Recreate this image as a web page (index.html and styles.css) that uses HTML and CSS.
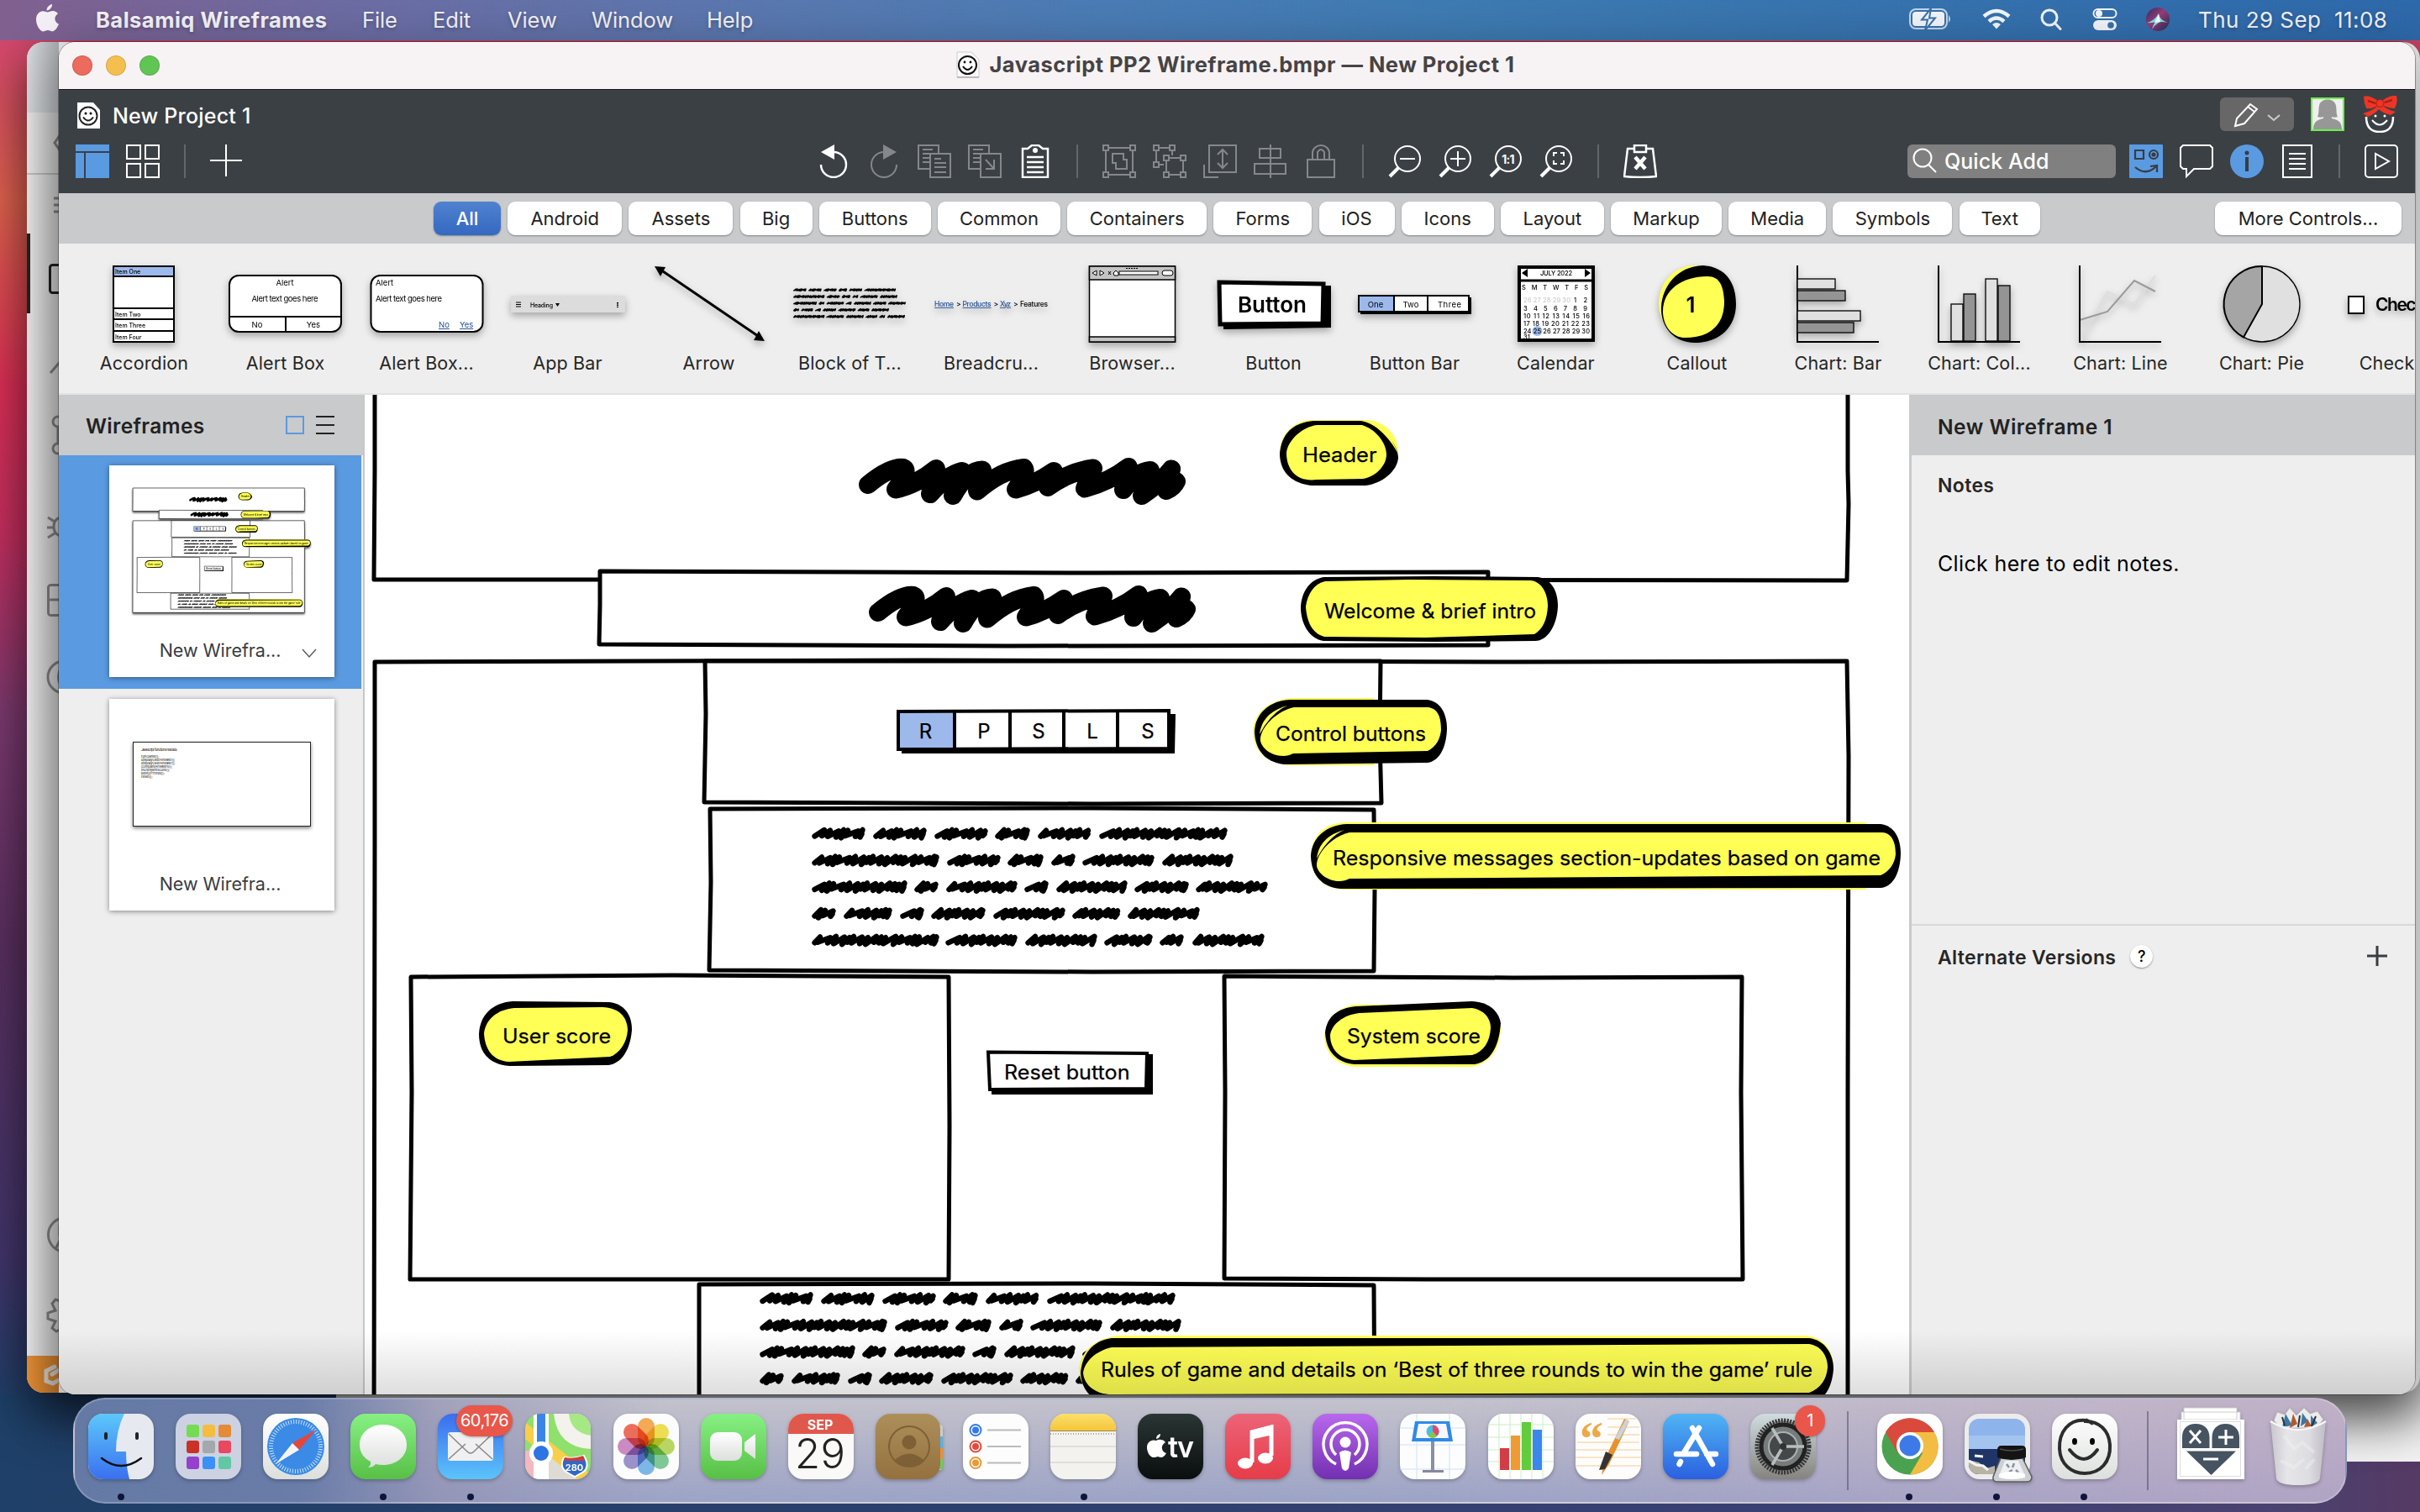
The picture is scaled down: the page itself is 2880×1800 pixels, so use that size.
FILE: index.html
```html
<!DOCTYPE html>
<html lang="en">
<head>
<meta charset="utf-8">
<title>Balsamiq Wireframes</title>
<link rel="stylesheet" href="styles.css">
</head>
<body>
<div class="desktop">

<div class="white-window"></div>
<div class="editor-window">
  <svg width="38" height="1608" viewBox="32 50 38 1608" fill="none" stroke="#8b8b8b" stroke-width="3">
    <defs><linearGradient id="fade"><stop offset="0" stop-opacity="0"/><stop offset="1" stop-opacity=".2"/></linearGradient></defs>
    <rect x="32" y="50" width="38" height="84" fill="#d8dbdf" stroke="none"/>
    <path d="M32 207H70" stroke="#c4c4c4" stroke-width="2"/>
    <path d="M72 160L65 170L72 180M64 236h10M64 244h10M64 252h10"/>
    <path d="M34 278V373" stroke="#222" stroke-width="4"/>
    <rect x="59.500" y="315.500" width="30" height="33" rx="3" stroke="#222"/>
    <path d="M60 444L72 430"/>
    <circle cx="69" cy="502" r="6"/><circle cx="69" cy="534" r="6"/><path d="M69 508v20"/>
    <path d="M57 616l8 5M56 628h8M57 640l8-5M72 616q-8 2-8 11t8 11"/>
    <rect x="57.500" y="696.500" width="30" height="36" rx="3"/><path d="M57 714h20"/>
    <circle cx="76" cy="806" r="19"/><path d="M72 796q-5 10 0 20"/>
    <circle cx="78" cy="1470" r="20.500"/><path d="M66 1487l6-12M71 1458v14"/>
    <path d="M72 1549l-6-2-4 5 4 8-9 3v7l9 3-4 8 5 4 6-3"/>
    <rect x="32" y="1614" width="38" height="44" fill="#e88f34" stroke="none"/>
    <path d="M65 1627l-10 5v12l8 3 10-6M62 1636l10-6" stroke="#e4e1dc" stroke-width="5" stroke-linecap="round"/>
    <rect x="32" y="50" width="38" height="1608" fill="url(#fade)" stroke="none"/>
  </svg>
</div>

<header class="menubar">
  <svg class="apple" width="28" height="34" viewBox="0 0 28 34" fill="#f4f0f6"><path d="M19 0c.4 3.600-3 7.500-6.400 7.400C12.200 4 15.500.6 19 0zM13.500 9.500C15 9.500 17 8 20 8c2.600 0 4.800 1.400 6 3.200-5.400 3.300-4.400 10.400 1 12.400-1.400 4-4.600 8.800-7.600 8.800-2 0-2.900-1.300-5.400-1.300s-3.500 1.300-5.300 1.300C4.600 32.400 0 24.800 0 18.400 0 12 4 8.300 8 8.300c2.400 0 4 1.200 5.500 1.200z"/></svg>
  <b class="m-app">Balsamiq Wireframes</b><span class="m-file">File</span><span class="m-edit">Edit</span><span class="m-view">View</span><span class="m-window">Window</span><span>Help</span>
  <div class="status">
    <svg width="52" height="28" viewBox="0 0 52 28"><rect x="1" y="2" width="44" height="23" rx="7" fill="none" stroke="#c4d6ea" stroke-width="2"/><rect x="4" y="5" width="38" height="17" rx="4" fill="#f2f6fa"/><path d="M47 9q4 4.500 0 9z" fill="#c4d6ea"/><path d="M26 1L15 14.500h7L19 27l12-14.500h-7z" fill="#f2f6fa" stroke="#3a72ae" stroke-width="2"/></svg>
    <svg width="34" height="26" viewBox="0 0 34 26" fill="none" stroke="#f2f6fa" stroke-width="4.500"><path d="M2 9.500Q17-3.500 32 9.500M8 15.500q9-8 18 0"/><path d="M17 24.500l-5-5.500q5-4 10 0z" fill="#f2f6fa" stroke="none"/></svg>
    <svg width="26" height="26" viewBox="0 0 26 26" fill="none" stroke="#f2f6fa" stroke-width="3" stroke-linecap="round"><circle cx="11" cy="11" r="9"/><path d="M17.500 17.500L24 24.500"/></svg>
    <svg width="30" height="28" viewBox="0 0 30 28"><rect x="1.500" y="2" width="27" height="10" rx="5" fill="none" stroke="#f2f6fa" stroke-width="2"/><circle cx="8" cy="7" r="4" fill="#f2f6fa"/><rect x="1" y="15" width="28" height="12" rx="6" fill="#f2f6fa"/><circle cx="22" cy="21" r="3.800" fill="#3a72ae"/></svg>
    <svg width="30" height="30" viewBox="0 0 30 30"><defs><linearGradient id="siri" x1="0" y1="0" x2="1" y2="1"><stop offset="0" stop-color="#293064"/><stop offset=".45" stop-color="#9b3c78"/><stop offset="1" stop-color="#1e2c55"/></linearGradient></defs><circle cx="15" cy="15" r="14" fill="url(#siri)"/><path d="M2 19q9-2 14-11 1 8 11 11-8-2-11 0-5 3-8 8 2-7 4-9-6 2-10 1z" fill="#7fe0e8"/><path d="M11 19l5-10 2 9z" fill="#fff"/></svg>
    <span class="clock">Thu 29 Sep&nbsp; 11:08</span>
  </div>
</header>

<main class="window">
  <div class="titlebar">
    <div class="lights"><i class="red"></i><i class="amber"></i><i class="green"></i></div>
    <svg width="28" height="32" viewBox="0 0 28 32"><path d="M1 1h17l9 9v21H1z" fill="#fafafa" stroke="#ccc"/><path d="M1 31h26" stroke="#bbb" stroke-width="2"/><circle cx="13.500" cy="16.500" r="10.500" fill="#fff" stroke="#111" stroke-width="2"/><path d="M8 18q5.500 8 11 0" fill="none" stroke="#111" stroke-width="2"/><circle cx="10" cy="13" r="1.400"/><circle cx="17" cy="13" r="1.400"/></svg>
    <span>Javascript PP2 Wireframe.bmpr — New Project 1</span>
  </div>

  <div class="topbar">
    <div class="project">
      <svg width="29" height="32" viewBox="0 0 29 32"><path d="M1 0h19l8 9v22H1z" fill="#fff"/><circle cx="14" cy="16" r="10.500" fill="#fff" stroke="#222" stroke-width="2"/><path d="M8 17.500q6 8 12 0" fill="none" stroke="#222" stroke-width="2"/><circle cx="11" cy="13" r="1.500"/><circle cx="17" cy="13" r="1.500"/></svg>
      <span>New Project 1</span>
      <div class="account">
        <div class="pencil">
          <svg width="88" height="40" viewBox="0 0 88 40" fill="none" stroke="#fff" stroke-width="2"><path d="M18 34l2-9L36 8l8 6-15 17zM33 11l8 6"/><path d="M57 21l7 6 7-6" stroke="#ccc"/></svg>
        </div>
        <svg width="40" height="40" viewBox="0 0 40 40"><rect x="1" y="1" width="38" height="38" fill="#f0f0f0" stroke="#6af04a" stroke-width="2"/><path d="M3 38c0-8 3-11 12-13v-2c-2 1-4 1-7 0 2-4 1-8 2-13 1-10 19-10 20 0 1 5 0 9 2 13-3 1-5 1-7 0v2c9 2 12 5 12 13z" fill="#979797"/></svg>
        <svg width="44" height="44" viewBox="0 0 44 44" fill="none"><path d="M6 25q0 18 16 18t16-18" stroke="#fff" stroke-width="2.500"/><path d="M13 29q9 11 18 0" stroke="#fff" stroke-width="2"/><circle cx="17" cy="24" r="1.500" fill="#fff"/><circle cx="28" cy="24" r="1.500" fill="#fff"/><path d="M20 6Q8-2 3 1q0 7 3 14 8 1 14-4-4 6-18 10l6 4q9-4 13-9 5 5 14 7l6-4q-10-2-16-8 8 4 15 4 4-8 2-15Q33-1 25 6z" fill="#ee3524"/><circle cx="22.500" cy="9" r="4.500" fill="#ee3524" stroke="#a32018"/><path d="M8 6l9 3M37 5l-9 3" stroke="#9e1d16" stroke-width="2"/></svg>
      </div>
    </div>

    <div class="toolbar">
      <div class="group">
        <svg width="40" height="40" viewBox="0 0 40 40" fill="#5a9ae1"><path d="M0 0h40v8H0zM0 10h10v30H0zM12 10h28v30H12z"/></svg>
        <svg width="40" height="40" viewBox="0 0 40 40" fill="none" stroke="#fff" stroke-width="2"><path d="M1 1h16v16H1zM23 1h16v16H23zM1 23h16v16H1zM23 23h16v16H23z"/></svg>
        <i class="sep"></i>
        <svg width="40" height="40" viewBox="0 0 40 40" stroke="#fff" stroke-width="2"><path d="M0 19h38M19 0v38"/></svg>
      </div>
      <div class="group">
        <svg width="40" height="40" viewBox="0 0 40 40" fill="none" stroke="#fff" stroke-width="2.500"><path d="M5 24a15 15 0 1 0 15-15"/><path d="M21 0v18L5 9z" fill="#fff" stroke="none"/></svg>
        <svg class="off" width="40" height="40" viewBox="0 0 40 40" fill="none" stroke-width="2"><path d="M35 24A15 15 0 1 1 20 9"/><path d="M19 0v18l16-9z" fill="#85888a" stroke="none"/></svg>
        <svg class="off" width="40" height="40" viewBox="0 0 40 40" fill="none" stroke-width="2"><path d="M15 29H1V1h24v10M6 6h12M6 11h9M6 16h8M6 21h8M15 11h24v28H15zM20 17h8M20 22h14M20 27h14M20 33h14"/></svg>
        <svg class="off" width="40" height="40" viewBox="0 0 40 40" fill="none" stroke-width="2"><path d="M15 29H1V1h24v10M6 6h12M6 11h9M6 16h8M6 21h8M15 11h24v28H15zM21 18l10 11M31 18v11H21"/></svg>
        <svg width="40" height="40" viewBox="0 0 40 40" fill="none" stroke="#fff" stroke-width="2.500"><path d="M5 5h6l5-4h8l5 4h6v34H5zM10 15h20M10 21h20M10 27h20M10 33h20"/><circle cx="20" cy="7" r="3" fill="#fff" stroke="none"/></svg>
        <i class="sep"></i>
        <svg class="off" width="40" height="40" viewBox="0 0 40 40" fill="none" stroke-width="2"><path d="M4 7v26M36 7v26M7 4h26M7 36h26M1 1h6v6H1zM33 1h6v6h-6zM1 33h6v6H1zM33 33h6v6h-6zM12 11h13v7h4v11H16v-7h-4z"/></svg>
        <svg class="off" width="40" height="40" viewBox="0 0 40 40" fill="none" stroke-width="2"><path d="M1 1h6v6H1zM20 1h6v6h-6zM1 21h6v6H1zM13 13h6v6h-6zM33 13h6v6h-6zM13 33h6v6h-6zM33 33h6v6h-6zM4 7v14M7 4h13M23 7v6M7 24h6M16 19v14M36 19v14M19 16h14M19 36h14"/></svg>
        <svg class="off" width="40" height="40" viewBox="0 0 40 40" fill="none" stroke-width="2"><path d="M7 1h32v32H7zM1 24v15h17M23 7v20M17 12l6-6 6 6M17 22l6 6 6-6"/></svg>
        <svg class="off" width="40" height="40" viewBox="0 0 40 40" fill="none" stroke-width="2"><path d="M7 5h25v11H7zM1 23h37v12H1zM20 0v40"/></svg>
        <svg class="off" width="40" height="40" viewBox="0 0 40 40" fill="none" stroke-width="2"><path d="M4 18h32v21H4zM10 18v-8a10 9 0 0 1 20 0v8M16 18v-9q4-6 8 0v9"/></svg>
        <i class="sep"></i>
        <svg width="40" height="40" viewBox="0 0 40 40" fill="none" stroke="#fff" stroke-width="2"><circle cx="23" cy="17" r="15"/><path d="M14 17h18"/><path d="M12 28L2 38" stroke-width="4"/></svg>
        <svg width="40" height="40" viewBox="0 0 40 40" fill="none" stroke="#fff" stroke-width="2"><circle cx="23" cy="17" r="15"/><path d="M14 17h18M23 8v18"/><path d="M12 28L2 38" stroke-width="4"/></svg>
        <svg width="40" height="40" viewBox="0 0 40 40" fill="none" stroke="#fff" stroke-width="2"><circle cx="23" cy="17" r="15"/><path d="M12 28L2 38" stroke-width="4"/><text x="22.500" y="22.500" class="one">1:1</text></svg>
        <svg width="40" height="40" viewBox="0 0 40 40" fill="none" stroke="#fff" stroke-width="2"><circle cx="23" cy="17" r="15"/><path d="M12 28L2 38" stroke-width="4"/><path d="M17 14v-4h4M25 10h4v4M29 19v4h-4M21 23h-4v-4"/></svg>
        <i class="sep"></i>
        <svg width="40" height="40" viewBox="0 0 40 40" fill="none" stroke="#fff" stroke-width="2.500"><path d="M12 5H5L1 38q19 2 38 0L35 5h-7M13 1h14v8H13z"/><path d="M14 15l12 14M26 15L14 29" stroke-width="4.500"/></svg>
      </div>
      <div class="group end">
        <div class="quick"><svg width="32" height="32" viewBox="0 0 32 32" fill="none" stroke="#fff" stroke-width="2"><circle cx="12" cy="12" r="10.500"/><path d="M19 20l9 9"/></svg>Quick Add</div>
        <svg width="40" height="40" viewBox="0 0 40 40" fill="none" stroke="#383d42" stroke-width="2.200"><rect width="40" height="40" rx="1" fill="#5a9ae1" stroke="none"/><path d="M7 7h10v10H7zM7 27q13 11 25-1M25 26l8-1v8"/><circle cx="29" cy="12" r="5"/><circle cx="29" cy="12" r="1.500" fill="#383d42"/></svg>
        <svg width="40" height="40" viewBox="0 0 40 40" fill="none" stroke="#fff" stroke-width="2"><path d="M4 1h32l3 3v22l-3 3H17L8 38V29H4l-3-3V4z"/></svg>
        <svg width="40" height="40" viewBox="0 0 40 40"><circle cx="20" cy="20" r="20" fill="#5a9ae1"/><circle cx="20" cy="10" r="2.500" fill="#383d42"/><path d="M20 15v17" stroke="#383d42" stroke-width="4"/></svg>
        <svg width="40" height="40" viewBox="0 0 40 40" fill="none" stroke="#fff" stroke-width="2"><path d="M3 1h34v38H3zM10 11h20M10 17h20M10 23h20M10 29h20"/></svg>
        <i class="sep"></i>
        <svg width="40" height="40" viewBox="0 0 40 40" fill="none" stroke="#fff" stroke-width="2"><rect x="1" y="1" width="38" height="38" rx="4"/><path d="M13 11v18l16-9z"/></svg>
      </div>
    </div>
  </div>

  <nav class="categories">
    <div class="tabs"><button class="on">All</button><button>Android</button><button>Assets</button><button>Big</button><button>Buttons</button><button>Common</button><button>Containers</button><button>Forms</button><button>iOS</button><button>Icons</button><button>Layout</button><button>Markup</button><button>Media</button><button>Symbols</button><button>Text</button></div>
    <button class="more">More Controls...</button>
  </nav>

  <section class="palette">
    <figure><svg viewBox="0 0 168 100"><g class="ink"><rect x="48" y="5" width="72" height="90"/><rect x="48" y="5" width="72" height="12" fill="#9db9ec"/><path d="M48 55h72M48 68h72M48 82h72"/></g><g class="t9"><text x="50" y="14">Item One</text><text x="50" y="64.500">Item Two</text><text x="50" y="78">Item Three</text><text x="50" y="91.500">Item Four</text></g></svg><figcaption>Accordion</figcaption></figure>
    <figure><svg viewBox="0 0 168 100"><g class="ink"><rect x="18" y="16" width="133" height="67" rx="11"/><path d="M18 65h133M85 65v18"/></g><g class="t11 mid"><text x="84" y="28">Alert</text><text x="84" y="47" textLength="79">Alert text goes here</text><text x="51" y="78">No</text><text x="118" y="78">Yes</text></g></svg><figcaption>Alert Box</figcaption></figure>
    <figure><svg viewBox="0 0 168 100"><g class="ink"><rect x="18.500" y="16" width="133" height="67" rx="11"/></g><g class="t11"><text x="24" y="28">Alert</text><text x="24" y="47" textLength="79">Alert text goes here</text><text class="link" x="99" y="78">No</text><text class="link" x="124" y="78">Yes</text></g></svg><figcaption>Alert Box...</figcaption></figure>
    <figure><svg viewBox="0 0 168 100"><rect x="17" y="40" width="136" height="20" fill="#dcdcdc"/><path d="M23 48h6M23 50.500h6M23 53h6" stroke="#000"/><text class="t9" x="40" y="53.500" textLength="27">Heading</text><path d="M70 49h5l-2.500 4z"/><path d="M144 48v6" stroke="#000" stroke-width="2" stroke-dasharray="1.500 1"/></svg><figcaption>App Bar</figcaption></figure>
    <figure><svg viewBox="0 0 168 100"><path d="M27 9L146 90" stroke="#000" stroke-width="3"/><path d="M20 5l13 1-6 11zM151 94l-13-1 6-11z"/></svg><figcaption>Arrow</figcaption></figure>
    <figure><svg viewBox="0 0 168 100"><use href="#copy" transform="translate(17 33) scale(.247 .25)"/></svg><figcaption>Block of T...</figcaption></figure>
    <figure><svg viewBox="0 0 168 100"><g class="t10"><text class="link" x="17" y="53" textLength="23">Home</text><text x="43" y="53">&gt;</text><text class="link" x="50.500" y="53" textLength="34">Products</text><text x="87.500" y="53">&gt;</text><text class="link" x="95" y="53" textLength="13">Xyz</text><text x="111" y="53">&gt;</text><text x="119" y="53" textLength="33">Features</text></g></svg><figcaption>Breadcru...</figcaption></figure>
    <figure><svg viewBox="0 0 168 100"><g class="ink thin"><rect x="33.500" y="5" width="102" height="90"/><rect x="33.500" y="5" width="102" height="16" fill="#c4c4c4"/><rect x="33.500" y="89" width="102" height="6" fill="#c4c4c4"/></g><rect x="69" y="11" width="46" height="4" fill="#fff" stroke="#000" stroke-width="1"/><rect x="120" y="10" width="13" height="6" rx="3" fill="#fff" stroke="#000" stroke-width="1"/><path d="M37 13l5-3v6zM51 13l-5-3v6zM56 11l3 4M59 11l-3 4M62 13l3-3 3 3v3h-5z" fill="#fff" stroke="#000"/><path d="M77 7.500h14" stroke="#000" stroke-dasharray="2 1"/></svg><figcaption>Browser...</figcaption></figure>
    <figure><svg viewBox="0 0 168 100"><path d="M25 30L153 28v50L25 80z"/><path d="M20 24l124 2-1 47-122 1z" fill="#fff" stroke="#000" stroke-width="5"/><text x="83" y="60" class="big mid" textLength="82">Button</text></svg><figcaption>Button</figcaption></figure>
    <figure><svg viewBox="0 0 168 100"><path d="M20 42h132v20H20z"/><g class="ink"><rect x="18" y="40" width="131" height="19"/><rect x="18" y="40" width="42" height="19" fill="#9db9ec"/><path d="M100 40v19"/></g><g class="t11 mid"><text x="38" y="54">One</text><text x="80" y="54">Two</text><text x="126" y="54" textLength="28">Three</text></g></svg><figcaption>Button Bar</figcaption></figure>
    <figure><svg viewBox="0 0 168 100"><rect x="41" y="6" width="88" height="87" fill="#fff" stroke="#000" stroke-width="4"/><path d="M41 22h88" stroke="#000" stroke-width="3"/><path d="M44 13l7-5v10zM126 13l-7-5v10z"/><circle cx="62.500" cy="82" r="6" fill="#9db9ec"/><g class="cal"><text x="66" y="16" textLength="38">JULY 2022</text><text x="44" y="33" textLength="79">S  M  T  W  T  F  S</text><text x="46" y="48" fill="#ccc" textLength="56">26 27 28 29 30</text><text x="106" y="48" textLength="16">1   2</text><text x="46" y="58" textLength="76">3   4   5   6   7   8   9</text><text x="46" y="67" textLength="79">10 11 12 13 14 15 16</text><text x="46" y="76" textLength="79">17 18 19 20 21 22 23</text><text x="46" y="85" textLength="79">24 25 26 27 28 29 30</text><text x="46" y="92">31</text></g></svg><figcaption>Calendar</figcaption></figure>
    <figure><svg viewBox="0 0 168 100"><ellipse cx="82" cy="49" rx="43" ry="45" fill="#ff5"/><path d="M92 4c28 2 39 22 39 46 0 28-20 46-49 46-26 0-41-20-40-42C43 30 60 5 92 4z"/><path d="M97 17c15 0 19 12 20 30 0 28-17 43-47 43-12 0-25-10-26-30-1-26 22-43 53-43z" fill="#ff5"/><text x="77" y="60" class="big mid">1</text></svg><figcaption>Callout</figcaption></figure>
    <figure><svg viewBox="0 0 168 100"><g class="ink bars"><path d="M36 4v91h97" fill="none"/><rect x="36" y="20" width="45" height="12"/><rect x="36" y="34" width="57" height="12" class="dk"/><rect x="36" y="58" width="75" height="12"/><rect x="36" y="72" width="67" height="12" class="dk"/></g></svg><figcaption>Chart: Bar</figcaption></figure>
    <figure><svg viewBox="0 0 168 100"><g class="ink bars"><path d="M36 4v91h97" fill="none"/><rect x="51" y="50" width="14" height="44"/><rect x="66" y="38" width="14" height="56" class="dk"/><rect x="92" y="20" width="14" height="74"/><rect x="107" y="28" width="14" height="66" class="dk"/></g></svg><figcaption>Chart: Col...</figcaption></figure>
    <figure><svg viewBox="0 0 168 100" fill="none"><path d="M38 93L69 35l32 16 25-35" stroke="#ddd" stroke-width="2"/><path d="M36 69l33-10 32-37 25 13" stroke="#999" stroke-width="2"/><path d="M36 4v91h97" stroke="#000" stroke-width="2"/></svg><figcaption>Chart: Line</figcaption></figure>
    <figure><svg viewBox="0 0 168 100"><g class="ink bars"><circle cx="85" cy="50" r="45"/><path d="M85 50V5A45 45 0 0 0 63 89.500z" fill="#a5a5a5"/></g></svg><figcaption>Chart: Pie</figcaption></figure>
    <figure><svg viewBox="0 0 168 100"><rect x="20" y="41" width="18" height="20" class="ink"/><text x="52" y="58" class="check" textLength="92">Checkbox</text></svg><figcaption>Checkbox</figcaption></figure>
  </section>

  <div class="body">
    <aside class="left">
      <div class="panel-head"><span>Wireframes</span>
        <svg width="60" height="24" viewBox="0 0 60 24" fill="none" stroke-width="2"><rect x="2" y="1" width="20" height="20" stroke="#5a9ae1"/><path d="M37 1h22M37 11h22M37 21h22" stroke="#222"/></svg>
      </div>
      <div class="page selected"><div class="card">
        <svg width="268" height="180" viewBox="130 554 268 180"><g class="mini" transform="translate(106.160 528.110) scale(.1165)"><use href="#board"/></g></svg>
        <div class="name"><span>New Wirefra...</span><svg width="18" height="12" viewBox="0 0 18 12" fill="none" stroke="#555" stroke-width="1.300"><path d="M1 1l8 9 8-9"/></svg></div>
      </div></div>
      <div class="page"><div class="card">
        <svg class="page2" width="268" height="180" viewBox="130 832 268 180"><rect x="158.500" y="883.500" width="211" height="100" fill="#fff" stroke="#222"/><g class="code"><text x="168" y="894" textLength="43">Javascript functions needed:</text><text x="168" y="902">runGame();</text><text x="168" y="906">displayUserAnswer();</text><text x="168" y="910">displayUserAnswer();</text><text x="168" y="914">compareAnswers();</text><text x="168" y="918">incrementScore();</text><text x="168" y="922">bestOfThree();</text><text x="168" y="926">reset();</text></g></svg>
        <div class="name"><span>New Wirefra...</span></div>
      </div></div>
    </aside>

    <div class="canvas">
      <svg width="1838" height="1190" viewBox="434 470 1838 1190">
        <g id="board">
          <g class="box">
            <path d="M446 454L2199 454L2199 560L2200 600L2198 691L1300 690L445 690L446 560z"/>
            <path d="M714 680L1300 682L1771 681L1770 730L1771 768L1200 769L713 767L714 720z"/>
            <path d="M446 788L1100 786L1800 788L2198 787L2200 900L2199 1300L2199 1727L445 1727L446 1000z"/>
            <path d="M839 787L1643 787L1642 880L1644 956L1300 957L838 955L840 850z"/>
            <path d="M845 963L1300 962L1635 964L1636 1060L1635 1156L1300 1157L844 1155L846 1050z"/>
            <path d="M489 1163L800 1161L1129 1163L1130 1340L1129 1523L800 1523L488 1523L490 1300z"/>
            <path d="M1457 1162L1800 1164L2073 1163L2072 1300L2074 1523L1700 1523L1457 1522L1458 1300z"/>
            <path d="M832 1529L1300 1528L1635 1530L1636 1692L832 1692z"/>
          </g>
          <path id="bigscribble" d="M1033 577Q1060 555 1075 557Q1083 560 1066 582.500Q1091 577 1114 558L1107 588Q1126 566 1145 561L1134 590Q1151 560 1169 559.500L1163 584.500Q1191 560 1218.500 557Q1223 563 1209 582.500Q1231 577 1254 561L1247 580Q1271 562 1301 557.500L1291 581.500Q1321 573 1343 556L1337 583Q1351 562 1369 560L1359 590Q1381 575 1394 558.500L1388 584Q1397 580 1400 573" fill="none" stroke="#000" stroke-width="22" stroke-linecap="round" stroke-linejoin="round"/>
          <use href="#bigscribble" x="12" y="152"/>
          <g transform="translate(966 992)"><g id="copy"></g></g>
          <use href="#copy" x="904" y="1545.500"/>

          <path d="M1073 850L1399 850L1398 897L1073 897z"/>
          <path d="M1069 847L1391 846L1391 891L1069 892z" fill="#fff" stroke="#000" stroke-width="4"/>
          <path d="M1071 849h64v41h-64z" fill="#9db9ec"/>
          <path d="M1136 847v44M1202 847v44M1266 847v44M1330 847v44" stroke="#000" stroke-width="4"/>
          <g class="hand mid"><text x="1101.500" y="879">R</text><text x="1171" y="879">P</text><text x="1236" y="879">S</text><text x="1300" y="879">L</text><text x="1366" y="879">S</text></g>

          <path d="M1180 1255h192v48h-192z"/>
          <path d="M1176 1252.500L1365 1254L1364 1296L1178 1297z" fill="#fff" stroke="#000" stroke-width="4"/>
          <text class="hand" x="1195" y="1285" textLength="149.500" lengthAdjust="spacingAndGlyphs">Reset button</text>

          <g>
            <rect x="1523" y="500" width="141" height="76" rx="38" fill="#ff5"/>
            <path d="M1563 501h57c18 4 43 22 44 44-1 16-20 31-39 33h-63c-24-2-39-16-39-38 2-24 16-37 40-39z"/>
            <path d="M1567 506h54c16 5 29 21 29 35s-14 27-28 29l-55 1c-22 3-36-10-36-32 2-16 20-31 36-33z" fill="#ff5"/>
            <path d="M1630 503c14 6 28 18 33 36-7-14-18-26-33-36z" fill="#ff5"/>
            <text class="hand" x="1550" y="550" textLength="88.500" lengthAdjust="spacingAndGlyphs">Header</text>
          </g>
          <g>
            <path d="M1575 687l130-1 125 1c16 2 24 16 24 35-1 22-12 41-27 41l-120 1-132-1c-18-3-27-22-27-40 1-19 11-33 27-36z"/>
            <path d="M1577 692l100-2 145 1c14 2 20 17 20 31-1 16-6 27-16 33l-130 4-120-1c-15-4-21-19-22-36 2-15 10-27 23-30z" fill="#ff5"/>
            <text class="hand" x="1576" y="736" textLength="252" lengthAdjust="spacingAndGlyphs">Welcome &amp; brief intro</text>
          </g>
          <g>
            <path d="M1535 831h100v80h-100q-44-4-44-42 4-32 44-38z" fill="#ff5"/>
            <path d="M1535 833h162c17 1 25 16 25 35-1 24-10 38-23 40l-170 2c-22-2-35-16-36-38 0-22 18-38 42-39z"/>
            <path d="M1540 842h160c12 2 15 13 15 27-1 11-6 20-16 25l-160 3c-14 8-36-1-39-15-1-16 20-36 40-40z" fill="#ff5"/>
            <path d="M1532 840q-30 8-33 34 14-26 33-34z" fill="#ff5"/>
            <text class="hand" x="1518" y="881.500" textLength="179" lengthAdjust="spacingAndGlyphs">Control buttons</text>
          </g>
          <g>
            <path d="M1600 979h620v80h-620q-40-2-40-42 4-36 40-38z" fill="#ff5"/>
            <path d="M1603 981h635c16 2 24 16 24 36-1 24-10 39-24 40l-643 1c-22-2-34-16-35-38 0-22 18-38 43-39z"/>
            <path d="M1606 991h634c12 1 16 12 16 26-1 11-8 21-18 25l-632 4c-14 8-36-1-39-15-1-16 20-36 39-40z" fill="#ff5"/>
            <path d="M1600 988q-30 8-33 34 14-26 33-34z" fill="#ff5"/>
            <text class="hand" x="1586" y="1030" textLength="652" lengthAdjust="spacingAndGlyphs">Responsive messages section-updates based on game</text>
          </g>
          <g>
            <path d="M610 1192l115 1c18 2 27 15 27 33-2 25-13 40-28 42l-118 1c-24-2-36-16-36-38 1-22 15-37 40-39z"/>
            <path d="M612 1200l105-1c20 1 29 11 30 27-1 16-10 28-21 32l-120 6c-20-1-29-15-30-34 2-16 15-28 36-30z" fill="#ff5"/>
            <text class="hand" x="598" y="1242" textLength="129" lengthAdjust="spacingAndGlyphs">User score</text>
          </g>
          <g>
            <path d="M1612 1196h140q34 4 34 32-4 36-34 42h-140q-34-4-36-36 4-32 36-38z" fill="#ff5"/>
            <path d="M1614 1198L1752 1192c20 1 32 12 34 26-2 28-12 46-31 49h-143c-22-2-34-16-35-38 2-18 14-29 37-31z"/>
            <path d="M1618 1206L1752 1200c12 2 22 10 22 24-1 16-8 28-22 32l-140 6c-18-1-29-13-29-30 2-13 16-24 35-26z" fill="#ff5"/>
            <text class="hand" x="1603" y="1242" textLength="159" lengthAdjust="spacingAndGlyphs">System score</text>
          </g>
          <g>
            <path d="M1330 1590h820q28 4 32 34-2 40-32 44h-820q-44-2-46-38 4-34 46-40z" fill="#ff5"/>
            <path d="M1323 1593h830c18 2 29 18 29 37-2 24-12 38-28 40h-834c-22-2-33-16-34-36 2-22 14-38 37-41z"/>
            <path d="M1323 1604l830-4c14 2 22 14 22 28-1 13-8 25-22 30l-830 2c-18 0-33-10-34-26 2-14 16-26 34-30z" fill="#ff5"/>
            <text class="hand" x="1310" y="1639" textLength="847" lengthAdjust="spacingAndGlyphs">Rules of game and details on ‘Best of three rounds to win the game’ rule</text>
          </g>
        </g>
      </svg>
    </div>

    <aside class="right">
      <div class="panel-head"><span>New Wireframe 1</span></div>
      <div class="notes"><h3>Notes</h3><p>Click here to edit notes.</p></div>
      <div class="versions"><h3>Alternate Versions</h3><i class="help">?</i><svg width="24" height="24" viewBox="0 0 24 24" stroke="#383d42" stroke-width="3"><path d="M0 12h24M12 0v24"/></svg></div>
    </aside>
  </div>
  <div class="dock-shade"></div>
</main>

<footer class="dock">
  <svg width="0" height="0"><defs>
    <linearGradient id="gblue" x2="0" y2="1"><stop stop-color="#5cc8fa"/><stop offset="1" stop-color="#3a70f0"/></linearGradient>
    <linearGradient id="gmail" x2="0" y2="1"><stop stop-color="#3b6df0"/><stop offset="1" stop-color="#5bc4fa"/></linearGradient>
    <linearGradient id="ggreen" x2="0" y2="1"><stop stop-color="#86f083"/><stop offset="1" stop-color="#58c046"/></linearGradient>
    <linearGradient id="gwhite" x2="0" y2="1"><stop stop-color="#fff"/><stop offset="1" stop-color="#dcdfdc"/></linearGradient>
    <linearGradient id="gred" x2="0" y2="1"><stop stop-color="#ec6478"/><stop offset="1" stop-color="#e63c48"/></linearGradient>
    <linearGradient id="gpurple" x2="0" y2="1"><stop stop-color="#b868ec"/><stop offset="1" stop-color="#7230b0"/></linearGradient>
    <linearGradient id="gstore" x2="0" y2="1"><stop stop-color="#50b4f4"/><stop offset="1" stop-color="#2a60e0"/></linearGradient>
    <linearGradient id="ggray" x2="0" y2="1"><stop stop-color="#cfdde0"/><stop offset="1" stop-color="#85837e"/></linearGradient>
    <linearGradient id="gtv" x2="0" y2="1"><stop stop-color="#2a3634"/><stop offset="1" stop-color="#0a0e0e"/></linearGradient>
    <linearGradient id="gbrown" x2="0" y2="1"><stop stop-color="#ad8f5a"/><stop offset="1" stop-color="#94713f"/></linearGradient>
    <linearGradient id="gyel" x2="0" y2="1"><stop stop-color="#fbe06a"/><stop offset="1" stop-color="#f5c53a"/></linearGradient>
    <linearGradient id="gbin"><stop stop-color="#c9c6cc"/><stop offset=".3" stop-color="#e6e5e8"/><stop offset=".7" stop-color="#dddce0"/><stop offset="1" stop-color="#bfbcc4"/></linearGradient>
    <clipPath id="tile"><rect width="78" height="78" rx="18"/></clipPath>
    <clipPath id="photo"><rect x="5" y="6" width="67" height="66" rx="12"/></clipPath>
  </defs></svg>
  <svg class="app" viewBox="0 0 78 78"><g clip-path="url(#tile)"><rect width="78" height="78" fill="#e6eaf0"/><path d="M0 0h43q-10 20-10 45h12q0 18 4 33H0z" fill="url(#gblue)"/></g><path d="M21 24v5M58 24v5" stroke="#222" stroke-width="4" stroke-linecap="round"/><path d="M16 53q23 18 47 0" fill="none" stroke="#111" stroke-width="2.500" stroke-linecap="round"/></svg>
  <svg class="app" viewBox="0 0 78 78"><rect width="78" height="78" rx="18" fill="#ccd2e2"/><g><rect x="13" y="13" width="15" height="15" rx="3" fill="#74dc50"/><rect x="32" y="13" width="15" height="15" rx="3" fill="#f4bd42"/><rect x="51" y="13" width="15" height="15" rx="3" fill="#e58a36"/><rect x="13" y="32" width="15" height="15" rx="3" fill="#c93226"/><rect x="32" y="32" width="15" height="15" rx="3" fill="#a3a8aa"/><rect x="51" y="32" width="15" height="15" rx="3" fill="#e84860"/><rect x="13" y="51" width="15" height="15" rx="3" fill="#9442cc"/><rect x="32" y="51" width="15" height="15" rx="3" fill="#3b90f6"/><rect x="51" y="51" width="15" height="15" rx="3" fill="#62c8a4"/></g></svg>
  <svg class="app" viewBox="0 0 78 78"><rect width="78" height="78" rx="18" fill="url(#gwhite)"/><circle cx="39" cy="39" r="34" fill="#3a8ae6"/><circle cx="39" cy="39" r="29.500" fill="none" stroke="#cfe4fa" stroke-width="5" stroke-dasharray="1 2.090"/><path d="M63 19L43 43l-8-8z" fill="#e8453a"/><path d="M15 60l20-25 8 8z" fill="#f4f4f4"/></svg>
  <svg class="app" viewBox="0 0 78 78"><rect width="78" height="78" rx="18" fill="url(#ggreen)"/><path d="M39 13c16 0 28 10 28 24S55 61 39 61q-5 0-9-1-3 4-9 4 4-3 3-7c-8-4-13-11-13-20 0-14 12-24 28-24z" fill="url(#gwhite)"/></svg>
  <svg class="app" viewBox="0 0 78 78"><rect width="78" height="78" rx="18" fill="url(#gmail)"/><rect x="12" y="22" width="54" height="34" rx="3" fill="#f0f0f2"/><path d="M13 54l20-18M65 54L45 36M13 24l22 21q4 4 8 0l22-21" fill="none" stroke="#888" stroke-width="1.500"/></svg>
  <svg class="app" viewBox="0 0 78 78"><g clip-path="url(#tile)"><rect width="78" height="78" fill="#8fe06c"/><path d="M34 0h44v42Q38 40 34 0z" fill="#f4f2ec"/><path d="M52 0h26v26Q54 22 52 0z" fill="#a6e884"/><path d="M0 10l78 62v10H64L0 30z" fill="#f8cf4a"/><path d="M28 50l34 28H28z" fill="#dedcd2"/><path d="M0 44h12v34H0z" fill="#f4b8c0"/><path d="M10 0h18v78H10z" fill="#fff"/><path d="M14 0h10v46H14z" fill="#3a86e8"/><circle cx="19" cy="47" r="14" fill="#fff"/><circle cx="19" cy="47" r="9" fill="#2d74e4"/></g><path d="M46 52q12 2 24-2 8 14-2 20l-9 5-9-5q-10-6-4-18z" fill="#3068c8" stroke="#fff" stroke-width="2"/><path d="M46 56l1-4q11 2 22-2l2 6z" fill="#d03a3a"/><text x="58.500" y="68" class="shield">280</text></svg>
  <svg class="app" viewBox="0 0 78 78"><rect width="78" height="78" rx="18" fill="#fcfcfc"/><g class="petals"><rect x="29" y="5" width="20" height="34" rx="10" fill="#f6a040"/><rect x="29" y="5" width="20" height="34" rx="10" fill="#eedc3c" transform="rotate(45 39 39)"/><rect x="29" y="5" width="20" height="34" rx="10" fill="#b2d450" transform="rotate(90 39 39)"/><rect x="29" y="5" width="20" height="34" rx="10" fill="#70c48a" transform="rotate(135 39 39)"/><rect x="29" y="5" width="20" height="34" rx="10" fill="#6cb0e6" transform="rotate(180 39 39)"/><rect x="29" y="5" width="20" height="34" rx="10" fill="#9084c8" transform="rotate(225 39 39)"/><rect x="29" y="5" width="20" height="34" rx="10" fill="#c87cbc" transform="rotate(270 39 39)"/><rect x="29" y="5" width="20" height="34" rx="10" fill="#ee5a46" transform="rotate(315 39 39)"/></g></svg>
  <svg class="app" viewBox="0 0 78 78"><rect width="78" height="78" rx="18" fill="url(#ggreen)"/><rect x="11" y="22" width="38" height="34" rx="9" fill="url(#gwhite)"/><path d="M52 34l13-10v30L52 44z" fill="url(#gwhite)"/></svg>
  <svg class="app" viewBox="0 0 78 78"><g clip-path="url(#tile)"><rect width="78" height="78" fill="#faf9f7"/><rect width="78" height="24" fill="#e0584c"/></g><text x="38" y="18.500" class="sep-m">SEP</text><text x="38" y="65" class="day" textLength="60">29</text></svg>
  <svg class="app" viewBox="0 0 78 78"><rect x="70" y="13" width="10" height="54" rx="4" fill="#ccc"/><path d="M76 27h4v14h-4z" fill="#5ab0e8"/><path d="M76 41h4v13h-4z" fill="#ee8f32"/><path d="M76 54h4v12h-4z" fill="#6fcc55"/><rect width="77" height="78" rx="18" fill="url(#gbrown)"/><circle cx="40" cy="39" r="24" fill="none" stroke="#7e6036" stroke-width="2"/><circle cx="40" cy="34" r="8.500" fill="#7e6036"/><path d="M23 55q17-15 34 0-17 16-34 0z" fill="#7e6036"/></svg>
  <svg class="app" viewBox="0 0 78 78"><rect width="78" height="78" rx="18" fill="#fdfdfd"/><g fill="none" stroke-width="2"><circle cx="15" cy="19.500" r="6.500" stroke="#3478ee"/><circle cx="15" cy="39" r="6.500" stroke="#e24a3e"/><circle cx="15" cy="58.500" r="6.500" stroke="#ea9838"/></g><circle cx="15" cy="19.500" r="4" fill="#3478ee"/><circle cx="15" cy="39" r="4" fill="#e24a3e"/><circle cx="15" cy="58.500" r="4" fill="#ea9838"/><path d="M29 19.500h40M29 39h40M29 58.500h40" stroke="#bbb" stroke-width="2"/></svg>
  <svg class="app" viewBox="0 0 78 78"><g clip-path="url(#tile)"><rect width="78" height="78" fill="#f3f2ee"/><rect width="78" height="20" fill="url(#gyel)"/><path d="M0 20.500h78" stroke="#a08a50"/><path d="M0 24h78" stroke="#aaa" stroke-width="2" stroke-dasharray="1 2"/><path d="M0 39h78M0 58h78" stroke="#d8d7d4" stroke-width="1.500"/></g></svg>
  <svg class="app" viewBox="0 0 78 78"><rect width="78" height="78" rx="18" fill="url(#gtv)"/><path d="M27 24q0 5-5 6 0-5 5-6zM22 32q3-2 6-1 3 0 5 3-5 3-4 8 1 4 5 5-2 4-5 5-3 0-5-1-3 1-5 1c-5 0-8-7-8-12 0-6 5-10 11-8z" fill="#fff"/><text x="36" y="51.500" class="tv" textLength="31">tv</text></svg>
  <svg class="app" viewBox="0 0 78 78"><rect width="78" height="78" rx="18" fill="url(#gred)"/><path d="M32 58V22l23-6v34" fill="none" stroke="#fff" stroke-width="5"/><path d="M30 20l27-7v12l-27 6z" fill="#fff"/><ellipse cx="24" cy="59" rx="9" ry="6.500" fill="#fff"/><ellipse cx="48" cy="53" rx="9" ry="6.500" fill="#fff"/></svg>
  <svg class="app" viewBox="0 0 78 78"><rect width="78" height="78" rx="18" fill="url(#gpurple)"/><g fill="none" stroke="#fff" stroke-width="3.500"><path d="M28 60a26 26 0 1 1 22 0"/><path d="M28 49a17 17 0 1 1 22 0"/></g><circle cx="39" cy="34" r="6.500" fill="#fff"/><path d="M32 46q7-5 14 0l-3 19q-4 6-8 0z" fill="#fff"/></svg>
  <svg class="app" viewBox="0 0 78 78"><rect width="78" height="78" rx="18" fill="#fdfdfe"/><path d="M0 17h78M0 37h78M0 66h78M20 0v78M59 0v78" stroke="#cfe0f4"/><path d="M39 32v36" stroke="#8492a4" stroke-width="4"/><path d="M27 67h25v3H27z" fill="#889"/><path d="M18 9h41l4 24H14z" fill="#2f8ae8"/><path d="M22 12h33l3 17H19z" fill="#f6f8fc"/><circle cx="39" cy="21" r="7.500" fill="#4ac0e0"/><path d="M39 21v-7.500a7.500 7.500 0 0 1 5 13z" fill="#e04878"/><path d="M39 21l5 6q-5 4-10 0z" fill="#8cc63e"/></svg>
  <svg class="app" viewBox="0 0 78 78"><rect width="78" height="78" rx="18" fill="#fdfefd"/><path d="M13 0v78M26 0v78M39 0v78M52 0v78M65 0v78M0 13h78M0 28h78M0 43h78M0 57h78" stroke="#cdeec4"/><path d="M14 41h11v26H14z" fill="#d23c46"/><path d="M27 26h11v41H27z" fill="#ef9a32"/><path d="M40 10h11v57H40z" fill="#62cc3c"/><path d="M53 19h11v48H53z" fill="#3c86ec"/></svg>
  <svg class="app" viewBox="0 0 78 78"><rect width="78" height="78" rx="18" fill="#fefdfb"/><path d="M2 34h74M0 43h78M0 52h78M0 62h78M38 6h34M38 16h38M38 25h38" stroke="#f8dcb8" stroke-width="1.500"/><text x="5" y="49" class="quote">“</text><path d="M58 6l6 3-24 51-9 13 3-17z" fill="#e8912e"/><path d="M60 6l4 3-12 22-5-2z" fill="#c8d4dc"/><path d="M36 45l8 4-9 17-7 1z" fill="#333"/></svg>
  <svg class="app" viewBox="0 0 78 78"><rect width="78" height="78" rx="18" fill="url(#gstore)"/><g stroke="#fff" stroke-width="6.500" stroke-linecap="round"><path d="M43 17L24 48M35 17l24 43M16 48h24M52 48h11M21 57l-1.500 3"/></g></svg>
  <svg class="app" viewBox="0 0 78 78"><rect width="78" height="78" rx="18" fill="url(#ggray)"/><circle cx="39" cy="39" r="31" fill="#8c9092" stroke="#333" stroke-width="5" stroke-dasharray="2 1.500"/><circle cx="39" cy="39" r="26" fill="#777b7c" stroke="#222" stroke-width="5"/><circle cx="39" cy="39" r="17" fill="#454849" stroke="#aab0b2" stroke-width="2"/><path d="M39 39h25M39 39L26 17M39 39L26 61" stroke="#b8bec0" stroke-width="3.500"/><circle cx="39" cy="39" r="4" fill="#333"/></svg>
  <i class="bar"></i>
  <svg class="app" viewBox="0 0 78 78"><rect width="78" height="78" rx="18" fill="#fdfdfd"/><circle cx="39" cy="39" r="33.500" fill="#4aa250"/><path d="M39 39L10 22A33.500 33.500 0 0 1 68 22H39z" fill="#da4a3c"/><path d="M39 22h29A33.500 33.500 0 0 1 39 72.500L54 47z" fill="#f2bd42"/><path d="M10 22l15 26 14-26z" fill="#da4a3c"/><circle cx="39" cy="38" r="16" fill="#fff"/><circle cx="39" cy="38" r="12.500" fill="#3d7ae8"/></svg>
  <svg class="app" viewBox="0 0 78 78"><rect width="78" height="78" rx="18" fill="#ececec"/><g clip-path="url(#photo)"><rect x="5" y="6" width="67" height="66" fill="#8fb4ec"/><path d="M5 26h67v16H5z" fill="#a4c4f0"/><path d="M5 42h67v30H5z" fill="#1f3568"/><path d="M5 55l12 3 9 7 10-3v10H5z" fill="#b9b3a6"/><path d="M5 56l9 5 8 1 6 5M12 50l10 1" fill="none" stroke="#f4f4f4" stroke-width="3"/></g><path d="M43 53h26l11 22q0 6-6 6H39q-6 0-5-6z" fill="#cdd0d3" stroke="#5c5c5e" stroke-width="1.500"/><path d="M48 56h16l8 18q-16 6-31 0z" fill="#eef0f2"/><path d="M50 60l3 4M59 59l-2 5M53 69l4-2M61 67l3 3" stroke="#8a92a0" stroke-width="2.500"/><path d="M41 72q15-6 31 0v4q-16 4-31 0z" fill="#fff"/><path d="M39 43q0-5 5-5h24q5 0 5 5v9q-17 6-34 0z" fill="#141414"/><path d="M42 42q14 4 28 0" fill="none" stroke="#4c4c4c" stroke-width="1.500"/></svg>
  <svg class="app" viewBox="0 0 78 78"><rect width="78" height="78" rx="18" fill="url(#gwhite)"/><path d="M40 8C20 6 8 22 9 42c1 18 14 29 30 29 19 0 31-14 30-34C68 20 56 8 38 9M40 7l9 5" fill="none" stroke="#2c2c2e" stroke-width="4"/><path d="M21 43q17 22 33 0" fill="none" stroke="#2c2c2e" stroke-width="4" stroke-linecap="round"/><ellipse cx="27" cy="33" rx="3" ry="4"/><ellipse cx="48" cy="33" rx="3" ry="4"/></svg>
  <i class="bar two"></i>
  <svg class="app" viewBox="0 0 78 78"><path d="M7-7h63v14H7zM4-2h70v14H4z" fill="#fff" stroke="#ccc"/><path d="M-1 7h80v71H-1z" fill="#fff"/><path d="M2.500 9.500h72v65h-72z" fill="none" stroke="#ddd"/><path d="M37.500 41H5V28C5 18 11 12 21 12s16.500 6 16.500 16zM40.500 41V28c0-10 6.500-16 16-16S73 18 73 28v13zM10 44.500h59L39.500 73z" fill="#465361"/><path d="M14 20l13 15M27 20L14 35M48 28h18M57 19v18M30 54h18" stroke="#fff" stroke-width="3"/></svg>
  <svg class="app" viewBox="0 0 78 78"><path d="M10 8l4-10 9 3 6-8 8 9 9-9 7 7 9-3 7 10-9 10H18z" fill="#ececec" stroke="#b8b8ba"/><path d="M24 0l8 14-12 2zM44-1l7 10-9 6zM54 2l8 9-8 5z" fill="#3a78a8"/><path d="M33 0l5 12-9 5zM50 6l-4 10 9-1z" fill="#b05a30"/><path d="M41 2l-2 14M60 3l-5 12M20 4l3 10" stroke="#333" stroke-width="2"/><path d="M6 9q33 20 66 0l-7 68q-2 8-26 8t-26-8z" fill="url(#gbin)"/><path d="M22 26l12 16 10-8 14 12M18 56l16 8 12-10M48 66l10-12" fill="none" stroke="#f2f2f4" stroke-width="4" opacity=".4"/><path d="M6 9q33 20 66 0" fill="none" stroke="#f6f6f8" stroke-width="2.500"/></svg>
  <em class="badge mail">60,176</em><em class="badge pref">1</em>
  <u class="dot d1"></u><u class="dot d2"></u><u class="dot d3"></u><u class="dot d4"></u><u class="dot d5"></u><u class="dot d6"></u><u class="dot d7"></u>
</footer>
</div>
<script src="script.js"></script>
</body>
</html>
```
FILE: styles.css
```css
* { box-sizing: border-box; }
body { margin: 0; font-family: Inter, "Liberation Sans", sans-serif; }
.desktop {
  position: relative; width: 2880px; height: 1800px; overflow: hidden;
  background:
    linear-gradient(90deg, #1f4068 0, #2b406c 38%, #3a4074 75%, #4a4270 94%, #553a64 100%) 0 1660px / 2880px 140px no-repeat,
    linear-gradient(180deg, #d4486c 50px, #e0624e 240px, #dc3056 460px, #c43060 640px, #7c3a70 850px, #5a3060 1130px, #42366c 1500px, #1f4068 1680px);
}
svg { display: block; flex: none; }

.menubar {
  position: absolute; inset: 0 0 auto 0; height: 48px; display: flex; align-items: center;
  padding: 0 36px 2px 43px; color: #f4f2f8; font-size: 25.5px; letter-spacing: -.1px; white-space: nowrap;
  text-shadow: 0 2px 4px rgba(0,0,0,.25);
  background: linear-gradient(90deg, #80608f, #6d6ca3 14%, #5a78b0 31%, #4a7cb5 46%, #3e7bb2 60%, #3672ae 80%, #2e69ab);
}
.menubar .apple { margin: -2px 43px 0 0; }
.menubar b { font-weight: 700; letter-spacing: .5px; }
.m-app { width: 317px; } .m-file { width: 84px; } .m-edit { width: 89px; } .m-view { width: 100px; } .m-window { width: 137px; }
.status { margin-left: auto; display: flex; align-items: center; }
.status svg:nth-child(1) { margin-right: 35px; }
.status svg:nth-child(2) { margin-right: 35px; }
.status svg:nth-child(3) { margin-right: 36px; }
.status svg:nth-child(4) { margin-right: 33px; }
.status svg:nth-child(5) { margin-right: 33px; }
.clock { width: 228px; font-size: 26px; letter-spacing: .45px; }

.editor-window {
  position: absolute; left: 32px; top: 50px; width: 2848px; height: 1608px; border-radius: 20px;
  background: #ebebeb; overflow: hidden; box-shadow: 0 24px 60px rgba(0,0,0,.6);
}
.white-window { position: absolute; left: 400px; top: 200px; width: 2480px; height: 1540px; background: #f2f2f2; }

.window {
  position: absolute; left: 70px; top: 50px; width: 2804px; height: 1610px; overflow: hidden;
  display: flex; flex-direction: column; border-radius: 20px; background: #eee;
  box-shadow: 0 0 0 1px rgba(0,0,0,.3), 0 20px 60px 10px rgba(0,0,0,.3);
}
.titlebar {
  height: 57px; flex: none; display: flex; align-items: center; justify-content: center; gap: 11px; position: relative;
  padding: 0 3px 3px 0;
  background: #f7f3f4; border-bottom: 1px solid #14181b; color: #464345; font-weight: 700; font-size: 25.5px; letter-spacing: .48px;
}
.lights { position: absolute; left: 16px; top: 16px; display: flex; gap: 16px; }
.lights i { width: 24px; height: 24px; border-radius: 50%; border: 1px solid rgba(0,0,0,.12); }
.red { background: #ec6a5e; } .amber { background: #f5bf4f; } .green { background: #61c554; }

.topbar { height: 123px; flex: none; background: #3b4045; color: #fff; }
.project { height: 62px; padding: 0 20px 0 21px; display: flex; align-items: center; font-size: 25px; letter-spacing: .2px; font-weight: 500; }
.project > svg { margin-right: 14px; }
.account { margin-left: auto; display: flex; align-items: center; gap: 20px; height: 44px; margin-top: -4px; }
.pencil { background: #676767; border-radius: 6px; }
.toolbar { height: 46px; padding: 3px 20px 0; display: grid; grid-template-columns: 1fr auto 1fr; }
.group { display: flex; gap: 20px; align-items: center; height: 40px; }
.group.end { justify-content: flex-end; }
.sep { width: 20px; height: 40px; background: linear-gradient(#63676a, #63676a) center / 2px 40px no-repeat; }
.off { stroke: #85888a; }
.one { font-size: 14px; font-weight: 700; fill: #fff; stroke: none; text-anchor: middle; letter-spacing: -.8px; }
.quick { width: 248px; height: 40px; margin-right: -4px; padding-left: 6px; display: flex; align-items: center; gap: 6px; background: #808080; border-radius: 6px; font-size: 25px; font-weight: 500; letter-spacing: .05px; }

.categories { height: 60px; flex: none; padding: 10px 16px 0 446px; display: flex; background: #c9cacc; }
.tabs { display: grid; gap: 8.200px; grid-template-columns: 80px 136px 124px 86px 133px 146px 166px 117px 90px 110px 123px 132px 116px 142px 96px; }
.categories button { height: 40px; border: 0; padding: 0; border-radius: 9px; background: #fff; color: #222; font: 400 22px Inter, sans-serif; box-shadow: 0 1px 2px rgba(0,0,0,.35); }
.categories .on { background: linear-gradient(#4f82cf, #3568c0); color: #fff; font-weight: 500; }
.categories .more { width: 222px; margin-left: auto; }

.palette { height: 180px; flex: none; display: grid; grid-template-columns: repeat(17, 168px); padding: 22px 0 0 17px; overflow: hidden; border-bottom: 2px solid #e2e2e2; background: #eee; }
figure { margin: 0; }
figure svg { width: 168px; height: 100px; filter: drop-shadow(0 4px 4px rgba(0,0,0,.3)); font-family: Inter, sans-serif; }
figcaption { text-align: center; font-size: 21.5px; letter-spacing: .15px; line-height: 30px; margin-top: 5px; padding-left: 1px; color: #262626; white-space: nowrap; }
.ink, .ink * { fill: #fff; stroke: #000; stroke-width: 2; }
.thin * { stroke-width: 1.500; }
.ink [fill="#9db9ec"] { fill: #9db9ec; } .ink [fill="#c4c4c4"] { fill: #c4c4c4; }
.ink path { fill: none; }
.bars rect, .bars circle { fill: #e0e0e0; stroke-width: 1.300; } .bars .dk { fill: #949494; } .ink [fill="#a5a5a5"] { fill: #a5a5a5; }
.t9 { font-size: 7px; font-weight: 500; } .t10 { font-size: 8.500px; font-weight: 500; } .t11 { font-size: 9.500px; font-weight: 400; }
.mid { text-anchor: middle; }
.link { fill: #235098; text-decoration: underline; }
.big { font-size: 26px; font-weight: 600; }
.cal { font-size: 7.500px; font-weight: 500; white-space: pre; }
.check { font-size: 21px; font-weight: 600; }

.body { flex: 1; display: flex; min-height: 0; }
.left { width: 364px; border-right: 2px solid #c6c7c9; background: #eee; }
.panel-head { height: 72px; display: flex; align-items: center; justify-content: space-between; background: #c9cacc; color: #222; font-weight: 600; font-size: 24.5px; letter-spacing: .5px; padding: 3px 34px 0 33px; }
.left .panel-head { padding-left: 32px; padding-right: 33px; padding-top: 2px; letter-spacing: .35px; }
.page { height: 278px; padding: 12px 0 0 60px; }
.page.selected { background: #5a9ae1; margin-right: 2px; }
.card { width: 268px; height: 252px; background: #fff; box-shadow: 0 1px 6px rgba(0,0,0,.45); }
.mini { filter: drop-shadow(0 14px 10px rgba(0,0,0,.7)); }
.page2 rect { filter: drop-shadow(0 2px 2px rgba(0,0,0,.5)); }
.code text { font: 400 4px Inter, sans-serif; }
.name { position: relative; display: flex; justify-content: center; padding: 25px 4px 0 0; font-size: 21.5px; letter-spacing: -.05px; line-height: 30px; color: #383d42; }
.name svg { position: absolute; left: 229px; top: 38px; }
.canvas { width: 1838px; background: #fff; overflow: hidden; }
.box path { fill: #fff; stroke: #000; stroke-width: 5; stroke-linejoin: round; }
.hand { font: 400 24px Inter, sans-serif; stroke: #000; stroke-width: .25px; }
.right { flex: 1; border-left: 3px solid #c9cacc; background: #eee; }
.right .panel-head { margin-left: -3px; padding-left: 34px; }
h3 { margin: 0; font-size: 23px; letter-spacing: .35px; font-weight: 600; line-height: 30px; color: #262626; }
.notes { height: 560px; padding: 21px 0 0 31px; border-bottom: 2px solid #d8d8d8; }
.notes p { margin: 62px 0 0; font-size: 25px; letter-spacing: .35px; line-height: 32px; color: #000; }
.versions { display: flex; align-items: center; padding: 23px 33px 0 31px; }
.help { width: 27px; height: 27px; margin: -4px auto 0 17px; border-radius: 50%; background: #fff; font: 500 18px/27px Inter, sans-serif; text-align: center; box-shadow: 0 1px 2px rgba(0,0,0,.4); }
.versions svg { margin-top: -4px; }
.dock-shade { position: absolute; left: 0; right: 0; bottom: 0; height: 76px; background: linear-gradient(rgba(0,0,0,0), rgba(0,0,0,.13)); }

.dock {
  position: absolute; left: 87px; top: 1664px; width: 2706px; height: 126px; border-radius: 38px;
  border: 2px solid rgba(255,255,255,.22); display: flex; gap: 26.100px; padding: 17px 0 0 16px;
  background:
    linear-gradient(90deg, #647aa4 0, #6a7ca8 10%, rgba(140,140,175,.6) 16%, rgba(190,185,205,0) 26%, rgba(190,170,195,0) 60%, rgba(190,165,195,.6) 100%),
    linear-gradient(#c3c2cc, #b0b2c8 50%, #9ca3c6);
}
.dock > svg:first-child { position: absolute; }
.app { width: 78px; height: 78px; overflow: visible; filter: drop-shadow(0 2px 2px rgba(0,0,0,.25)); font-family: Inter, sans-serif; }
.bar { width: 2px; height: 94px; margin: -3px 8px 0 11px; background: rgba(60,55,85,.45); }
.bar.two { margin: -3px 9px 0 9px; }
.petals rect { opacity: .88; mix-blend-mode: multiply; }
.shield { font-size: 11px; font-weight: 700; fill: #fff; text-anchor: middle; }
.sep-m { font-size: 16px; font-weight: 700; fill: #fff; text-anchor: middle; }
.day { font-size: 49px; font-weight: 300; fill: #222; text-anchor: middle; }
.tv { font-size: 34px; font-weight: 600; fill: #fff; }
.quote { font: 700 56px "Liberation Serif", serif; fill: #eea848; }
.badge { position: absolute; top: 7px; height: 37px; border-radius: 19px; background: #e9564a; color: #fff; font-style: normal; font-size: 20px; letter-spacing: -.5px; line-height: 37px; text-align: center; box-shadow: 0 1px 3px rgba(0,0,0,.3); }
.badge.mail { left: 454px; width: 67px; } .badge.pref { left: 2047px; width: 36px; }
.dot { position: absolute; top: 112px; width: 8px; height: 8px; border-radius: 50%; background: #10153a; }
.d1 { left: 51px; } .d2 { left: 363px; } .d3 { left: 467px; } .d4 { left: 1197px; } .d5 { left: 2179px; } .d6 { left: 2283px; } .d7 { left: 2387px; }
```
FILE: script.js
```js
// Scribbled placeholder copy: each word is [offset, width] on its line.
const lines = [
  [[0, 63], [73, 63], [146, 63], [218, 41], [269, 63], [342, 152]],
  [[0, 151], [161, 63], [233, 42], [285, 28], [322, 85], [417, 84]],
  [[0, 113], [122, 28], [160, 84], [253, 28], [291, 84], [384, 64], [457, 85]],
  [[0, 28], [38, 57], [105, 28], [142, 64], [216, 85], [310, 57], [376, 85]],
  [[0, 151], [159, 85], [254, 85], [348, 57], [414, 28], [453, 85]]
];
const steps = [10, 7, 10, 6, 5, 12, 7, 10, 6, 5];
let d = "";
lines.forEach((line, row) => {
  const y = row * 31.7;
  line.forEach(([start, width], k) => {
    let x = start + 3.5, i = k + row;
    const end = start + width - 5;
    d += `M${x} ${y + 3.5}`;
    while (x < end) {
      const s = Math.min(steps[i % steps.length], end - x + 1);
      x += s;
      d += `L${(x + 1.5).toFixed(1)} ${(y - 4 + (i % 3) * 0.7).toFixed(1)}L${(x - 1.5).toFixed(1)} ${(y + 3 + (i % 4) * 0.8).toFixed(1)}`;
      i++;
    }
    d += `L${start + width - 3.5} ${y + 1}`;
  });
});
const path = document.createElementNS("http://www.w3.org/2000/svg", "path");
path.setAttribute("d", d);
path.setAttribute("fill", "none");
path.setAttribute("stroke", "#000");
path.setAttribute("stroke-width", "6.4");
path.setAttribute("stroke-linecap", "round");
path.setAttribute("stroke-linejoin", "round");
document.getElementById("copy").appendChild(path);
```
